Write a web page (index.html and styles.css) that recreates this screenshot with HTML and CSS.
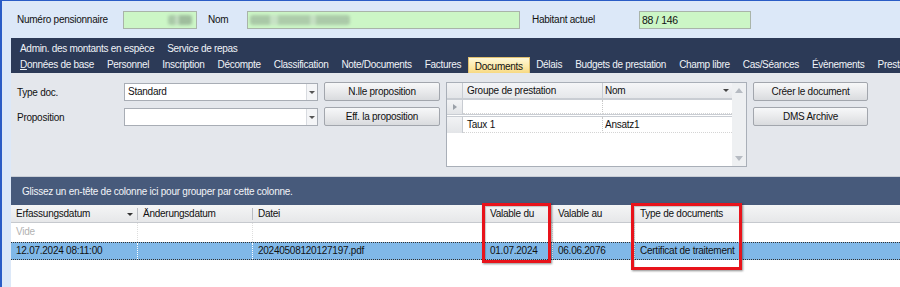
FILE: index.html
```html
<!DOCTYPE html>
<html lang="fr">
<head>
<meta charset="utf-8">
<title>Documents</title>
<link rel="stylesheet" href="styles.css">
</head>
<body>
<div class="window">
  <div class="topbar">
    <span class="lbl lbl-num">Numéro pensionnaire</span>
    <div class="field f-num"><span class="blur b1"></span></div>
    <span class="lbl lbl-nom">Nom</span>
    <div class="field f-nom"><span class="blur b2"></span></div>
    <span class="lbl lbl-hab">Habitant actuel</span>
    <div class="field f-hab">88 / 146</div>
  </div>

  <div class="main">
    <div class="tabs">
      <div class="tabrow">
        <span class="tab">Admin. des montants en espèce</span>
        <span class="tab">Service de repas</span>
      </div>
      <div class="tabrow">
        <span class="tab"><u>D</u>onnées de base</span>
        <span class="tab">Personnel</span>
        <span class="tab">Inscription</span>
        <span class="tab">Décompte</span>
        <span class="tab">Classification</span>
        <span class="tab">Note/Documents</span>
        <span class="tab">Factures</span>
        <span class="tab active">Documents</span>
        <span class="tab">Délais</span>
        <span class="tab">Budgets de prestation</span>
        <span class="tab">Champ libre</span>
        <span class="tab">Cas/Séances</span>
        <span class="tab">Évènements</span>
        <span class="tab">Prestations</span>
      </div>
    </div>

    <div class="form">
      <div class="formgrid">
        <span class="flabel r1">Type doc.</span>
        <div class="select r1"><span class="val">Standard</span><span class="drop"><i class="tri"></i></span></div>
        <button class="btn r1 c3">N.lle proposition</button>
        <span class="flabel r2">Proposition</span>
        <div class="select r2"><span class="val"></span><span class="drop"><i class="tri"></i></span></div>
        <button class="btn r2 c3">Eff. la proposition</button>

        <div class="minigrid">
          <div class="mg-body">
            <div class="mg-head">
              <span class="ind"></span>
              <span class="mg-c1">Groupe de prestation</span>
              <span class="mg-c2">Nom<i class="tri sm"></i></span>
            </div>
            <div class="mg-new">
              <span class="ind"><i class="rtri"></i></span>
              <span class="mg-c1"></span>
              <span class="mg-c2"></span>
            </div>
            <div class="mg-row">
              <span class="ind"></span>
              <span class="mg-c1">Taux 1</span>
              <span class="mg-c2">Ansatz1</span>
            </div>
          </div>
          <div class="mg-scroll"><i class="up"></i><i class="down"></i></div>
        </div>

        <button class="btn r1 c5">Créer le document</button>
        <button class="btn r2 c5">DMS Archive</button>
      </div>
    </div>

    <div class="groupbar">Glissez un en-tête de colonne ici pour grouper par cette colonne.</div>

    <div class="grid">
      <div class="grow ghead">
        <span class="gc w1 sep">Erfassungsdatum<i class="tri gtri"></i></span>
        <span class="gc w2 sep">Änderungsdatum</span>
        <span class="gc w3">Datei</span>
        <span class="gc w4">Valable du</span>
        <span class="gc w5">Valable au</span>
        <span class="gc w6">Type de documents</span>
        <span class="gc w7"></span>
      </div>
      <div class="grow gfilter">
        <span class="gc w1 dot vide">Vide</span>
        <span class="gc w2 dot"></span>
        <span class="gc w3 dot"></span>
        <span class="gc w4 dot"></span>
        <span class="gc w5 dot"></span>
        <span class="gc w6 dot"></span>
        <span class="gc w7"></span>
      </div>
      <div class="grow gsel">
        <span class="gc w1 dotw">12.07.2024 08:11:00</span>
        <span class="gc w2 dotw"></span>
        <span class="gc w3 dotw">20240508120127197.pdf</span>
        <span class="gc w4 dotw">01.07.2024</span>
        <span class="gc w5 dotw">06.06.2076</span>
        <span class="gc w6 dotw">Certificat de traitement</span>
        <span class="gc w7"></span>
      </div>
      <div class="gempty"></div>

      <div class="mark mark1"></div>
      <div class="mark mark2"></div>
    </div>
  </div>
</div>
</body>
</html>
```

FILE: styles.css
```css
* { box-sizing: border-box; }
html, body { margin: 0; padding: 0; }
body {
  width: 900px;
  height: 287px;
  overflow: hidden;
  font-family: "Liberation Sans", Arial, sans-serif;
  font-size: 10px;
  letter-spacing: -0.25px;
  color: #111;
  background: #dce8f8;
}
.window {
  height: 287px;
  border-left: 2px solid #2a5cc6;
  border-top: 1px solid #2a5cc6;
  background: #dce8f8;
  display: flex;
  flex-direction: column;
}

/* top bar */
.topbar {
  height: 37px;
  display: flex;
  align-items: center;
  padding-left: 15px;
  flex: none;
}
.lbl { white-space: nowrap; }
.lbl-num { width: 106px; }
.lbl-nom { width: 39px; }
.lbl-hab { width: 107px; }
.field {
  height: 18px;
  background: #ccf6c6;
  border: 1px solid #a9b4a9;
  display: flex;
  align-items: center;
  padding-left: 2px;
  position: relative;
}
.f-num { width: 74px; margin-right: 11px; justify-content: flex-end; padding-right: 4px; }
.f-nom { width: 273px; margin-right: 12px; }
.f-hab { width: 112px; font-size: 10.5px; }
.blur {
  display: block;
  height: 10px;
  border-radius: 3px;
  filter: blur(1.5px);
}
.b1 { width: 24px; background: linear-gradient(90deg, #a9c9a7 0 30%, #c2dcc0 30% 45%, #9fbd9d 45% 100%); }
.b2 { width: 100px; background: linear-gradient(90deg, #a6c4a4 0 20%, #c6e0c4 20% 28%, #aac8a8 28% 60%, #c4dec2 60% 66%, #a8c6a6 66% 100%); opacity: .9; }

/* main */
.main {
  flex: 1;
  margin-left: 9px;
  display: flex;
  flex-direction: column;
  min-height: 0;
}
.tabs {
  height: 35px;
  background: #2c3a57;
  padding-left: 2.5px;
  padding-top: 2px;
  flex: none;
  color: #f0f3f8;
  overflow: hidden;
  letter-spacing: -0.3px;
}
.tabrow {
  display: flex;
  height: 17px;
  align-items: center;
  white-space: nowrap;
}
.tabrow + .tabrow { margin-top: -1px; }
.tab { padding: 0 6.5px; line-height: 15px; }
.tab.active {
  color: #111;
  background: linear-gradient(#fff8d8, #fbe7a4 60%, #f7d77c);
  border: 1px solid #e0c070;
  border-bottom: none;
  padding: 1px 6px 0 6px;
  height: 17px;
  margin-top: 1px;
}

/* form */
.form {
  height: 104px;
  background: #e4e7ec;
  padding: 9px 0 0 6px;
  flex: none;
  border-bottom: 1px solid #c9ced6;
}
.formgrid {
  display: grid;
  grid-template-columns: 101px 194px 116px 301px 115px;
  grid-template-rows: 19px 19px;
  column-gap: 6px;
  row-gap: 6px;
  align-items: stretch;
}
.r1 { grid-row: 1; }
.r2 { grid-row: 2; }
.c3 { grid-column: 3; }
.c5 { grid-column: 5; }
.flabel { grid-column: 1; display: flex; align-items: center; padding-top: 2px; }
.select {
  grid-column: 2;
  background: #fff;
  border: 1px solid #a8adb5;
  display: flex;
  margin-top: 1px;
}
.select .val { flex: 1; padding: 2px 3px; }
.select .drop {
  width: 11px;
  border-left: 1px solid #d8dbe0;
  display: flex;
  align-items: center;
  justify-content: center;
  background: #f4f5f7;
}
.tri {
  display: inline-block;
  width: 0; height: 0;
  border-left: 3px solid transparent;
  border-right: 3px solid transparent;
  border-top: 3px solid #555;
}
.btn {
  font-family: inherit;
  font-size: 10px;
  letter-spacing: -0.25px;
  color: #111;
  background: linear-gradient(#f7f8f9, #e9eaec 50%, #d9dbde);
  border: 1px solid #a2a6ad;
  border-radius: 2px;
  padding: 0;
  height: 19px;
}
.minigrid {
  grid-column: 4;
  grid-row: 1 / span 4;
  height: 85px;
  border: 1px solid #a9afb8;
  background: #fff;
  display: flex;
}
.mg-body { flex: 1; }
.mg-head, .mg-new, .mg-row { display: flex; }
.mg-head {
  height: 17px;
  background: linear-gradient(#f5f6f8, #e5e7ea);
  border-bottom: 2px solid #c9cdd3;
  line-height: 15px;
}
.mg-new { height: 17px; border-bottom: 3px double #c9cdd3; }
.mg-row { height: 16px; line-height: 15px; }
.ind {
  width: 16px;
  flex: none;
  background: linear-gradient(#f2f3f5, #e3e5e8);
  border-right: 1px solid #c8ccd2;
  display: flex;
  align-items: center;
  justify-content: center;
}
.mg-c1 { width: 140px; padding-left: 4px; border-right: 1px dotted #c8c8c8; border-bottom: 1px dotted #d4d4d4; }
.mg-head .mg-c1 { border-right: 1px solid #c9cdd3; border-bottom: none; }
.mg-c2 { flex: 1; padding-left: 2px; position: relative; border-bottom: 1px dotted #d4d4d4; }
.mg-head .mg-c2 { border-bottom: none; }
.tri.sm { position: absolute; right: 3px; top: 6px; border-top-color: #444; }
.rtri {
  width: 0; height: 0;
  border-top: 3px solid transparent;
  border-bottom: 3px solid transparent;
  border-left: 4px solid #9aa0a8;
}
.mg-scroll {
  width: 14px;
  background: #eef0f2;
  position: relative;
}
.up, .down {
  position: absolute;
  left: 3px;
  width: 0; height: 0;
  border-left: 4px solid transparent;
  border-right: 4px solid transparent;
}
.up { top: 5px; border-bottom: 5px solid #b6bbc2; }
.down { bottom: 5px; border-top: 5px solid #b6bbc2; }

/* group bar */
.groupbar {
  height: 28px;
  background: #475a7b;
  color: #f2f4f8;
  padding-left: 11px;
  display: flex;
  align-items: center;
  flex: none;
}

/* grid */
.grid {
  flex: 1;
  background: #fff;
  position: relative;
}
.grow { display: flex; }
.gc {
  flex: none;
  padding-left: 5px;
  white-space: nowrap;
  position: relative;
}
.w1 { width: 127px; }
.w2 { width: 115px; }
.w3 { width: 232px; }
.w4 { width: 68px; }
.w5 { width: 82px; }
.w6 { width: 105px; }
.w7 { flex: 1; }
.ghead {
  height: 18px;
  line-height: 18px;
  background: linear-gradient(#f4f5f6, #e6e7e9);
  border-bottom: 1px solid #c6c9ce;
}
.sep::after {
  content: "";
  position: absolute;
  right: 0; top: 3px;
  height: 12px;
  border-right: 1px solid #b9bcc2;
}
.gtri { position: absolute; right: 5px; top: 8px; border-top-color: #333; }
.gfilter { height: 19px; line-height: 18px; }
.dot { border-right: 1px dotted #dedede; }
.vide { color: #b2b2b2; }
.gsel {
  height: 18px;
  line-height: 16px;
  background: #80b8e8;
  border-top: 1px dotted #333;
  border-bottom: 1px dotted #333;
}
.dotw { border-right: 1px dotted #ffffff; }
.gempty { height: 30px; }

.mark {
  position: absolute;
  border: 3px solid #e8131b;
  box-shadow: 1px 1px 2px rgba(0,0,0,.45), inset 1px 1px 1px rgba(0,0,0,.2);
}
.mark1 { left: 471px; top: -2px; width: 69px; height: 60px; }
.mark2 { left: 620px; top: -2px; width: 111px; height: 67px; }
```
